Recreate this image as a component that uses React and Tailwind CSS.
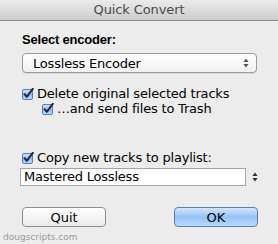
import React, { useState } from 'react';

const Check = ({ checked }) => (
  <svg width="12" height="12" viewBox="0 0 12 12" className="shrink-0">
    <defs>
      <linearGradient id="cbg" x1="0" y1="0" x2="0" y2="1">
        <stop offset="0" stopColor="#d7e8fb" />
        <stop offset="0.5" stopColor="#8dbbef" />
        <stop offset="1" stopColor="#bcdcfb" />
      </linearGradient>
    </defs>
    <rect x="0.5" y="1.5" width="10" height="10" rx="1.5" fill="url(#cbg)" stroke="#5a7eab" />
    {checked && (
      <path d="M2.6 6.2 L4.8 8.8 L10.8 0.8" fill="none" stroke="#1d2a3a" strokeWidth="2" strokeLinecap="round" strokeLinejoin="round" />
    )}
  </svg>
);

const Arrows = ({ color = '#333' }) => (
  <svg width="6" height="10" viewBox="0 0 6 10">
    <path d="M3 0.5 L5.6 4 L0.4 4 Z" fill={color} />
    <path d="M3 9.5 L5.6 6 L0.4 6 Z" fill={color} />
  </svg>
);

const CheckRow = ({ label, checked, onToggle, indent }) => (
  <label className={`flex items-center gap-[3px] h-[15px] cursor-default ${indent ? 'pl-[20px]' : ''}`} onClick={onToggle}>
    <Check checked={checked} />
    <span className="text-[13px] text-black leading-none tracking-[-0.2px]">{label}</span>
  </label>
);

const App = () => {
  const [opts, setOpts] = useState({ del: true, trash: true, copy: true });
  const [playlist, setPlaylist] = useState('Mastered Lossless');

  const toggle = (key) => setOpts({ ...opts, [key]: !opts[key] });

  return (
    <div className="w-[278px] h-[244px] bg-[#ececec] flex flex-col overflow-hidden" style={{ fontFamily: '"DejaVu Sans", "Liberation Sans", sans-serif' }}>
      <div className="h-[21px] shrink-0 flex items-center justify-center bg-linear-to-b from-[#ebebeb] to-[#cdcdcd] border-b border-[#8a8a8a]">
        <span className="text-[13px] text-[#4a4a4a] tracking-[-0.1px]">Quick Convert</span>
      </div>

      <div className="flex flex-col pl-[22px] pr-[20px]">
        <div className="mt-[11px] text-[13px] font-bold text-black leading-[16px] tracking-[-0.2px] font-['Liberation_Sans',sans-serif]">Select encoder:</div>

        <div className="mt-[5px] h-[20px] w-[235px] flex items-center justify-between pl-[10px] pr-[7px] rounded-[4px] border border-[#9a9a9a] bg-linear-to-b from-[#ffffff] to-[#f0f0f0] shadow-[0_1px_0_rgba(0,0,0,0.08)]">
          <span className="text-[13px] text-black leading-none tracking-[-0.2px]">Lossless Encoder</span>
          <Arrows color="#555" />
        </div>

        <div className="mt-[13px] flex flex-col">
          <CheckRow label="Delete original selected tracks" checked={opts.del} onToggle={() => toggle('del')} />
          <CheckRow label="…and send files to Trash" checked={opts.trash} onToggle={() => toggle('trash')} indent />
        </div>

        <div className="mt-[34px]">
          <CheckRow label="Copy new tracks to playlist:" checked={opts.copy} onToggle={() => toggle('copy')} />
        </div>

        <div className="mt-[3px] -ml-[2px] flex items-center">
          <input
            value={playlist}
            onChange={(e) => setPlaylist(e.target.value)}
            className="w-[229px] h-[18px] px-[3px] bg-white border border-[#a5a5a5] text-[13px] text-black outline-none tracking-[-0.2px]"
          />
          <div className="ml-[6px]"><Arrows /></div>
        </div>

        <div className="mt-[21px] flex justify-between w-[236px]">
          <button className="w-[84px] h-[20px] rounded-[4px] border border-[#8e8e8e] bg-linear-to-b from-[#ffffff] to-[#ebebeb] text-[13px] text-black leading-none">
            Quit
          </button>
          <button className="w-[84px] h-[20px] rounded-[4px] border border-[#5a7fb3] bg-linear-to-b from-[#d3e6fc] via-[#95c2f4] to-[#b9dafc] text-[13px] text-black leading-none">
            OK
          </button>
        </div>
      </div>

      <div className="mt-auto mb-[1px] pl-[3px] text-[9px] text-[#9a9a9a] leading-[12px]">dougscripts.com</div>
    </div>
  );
};

export default App;
